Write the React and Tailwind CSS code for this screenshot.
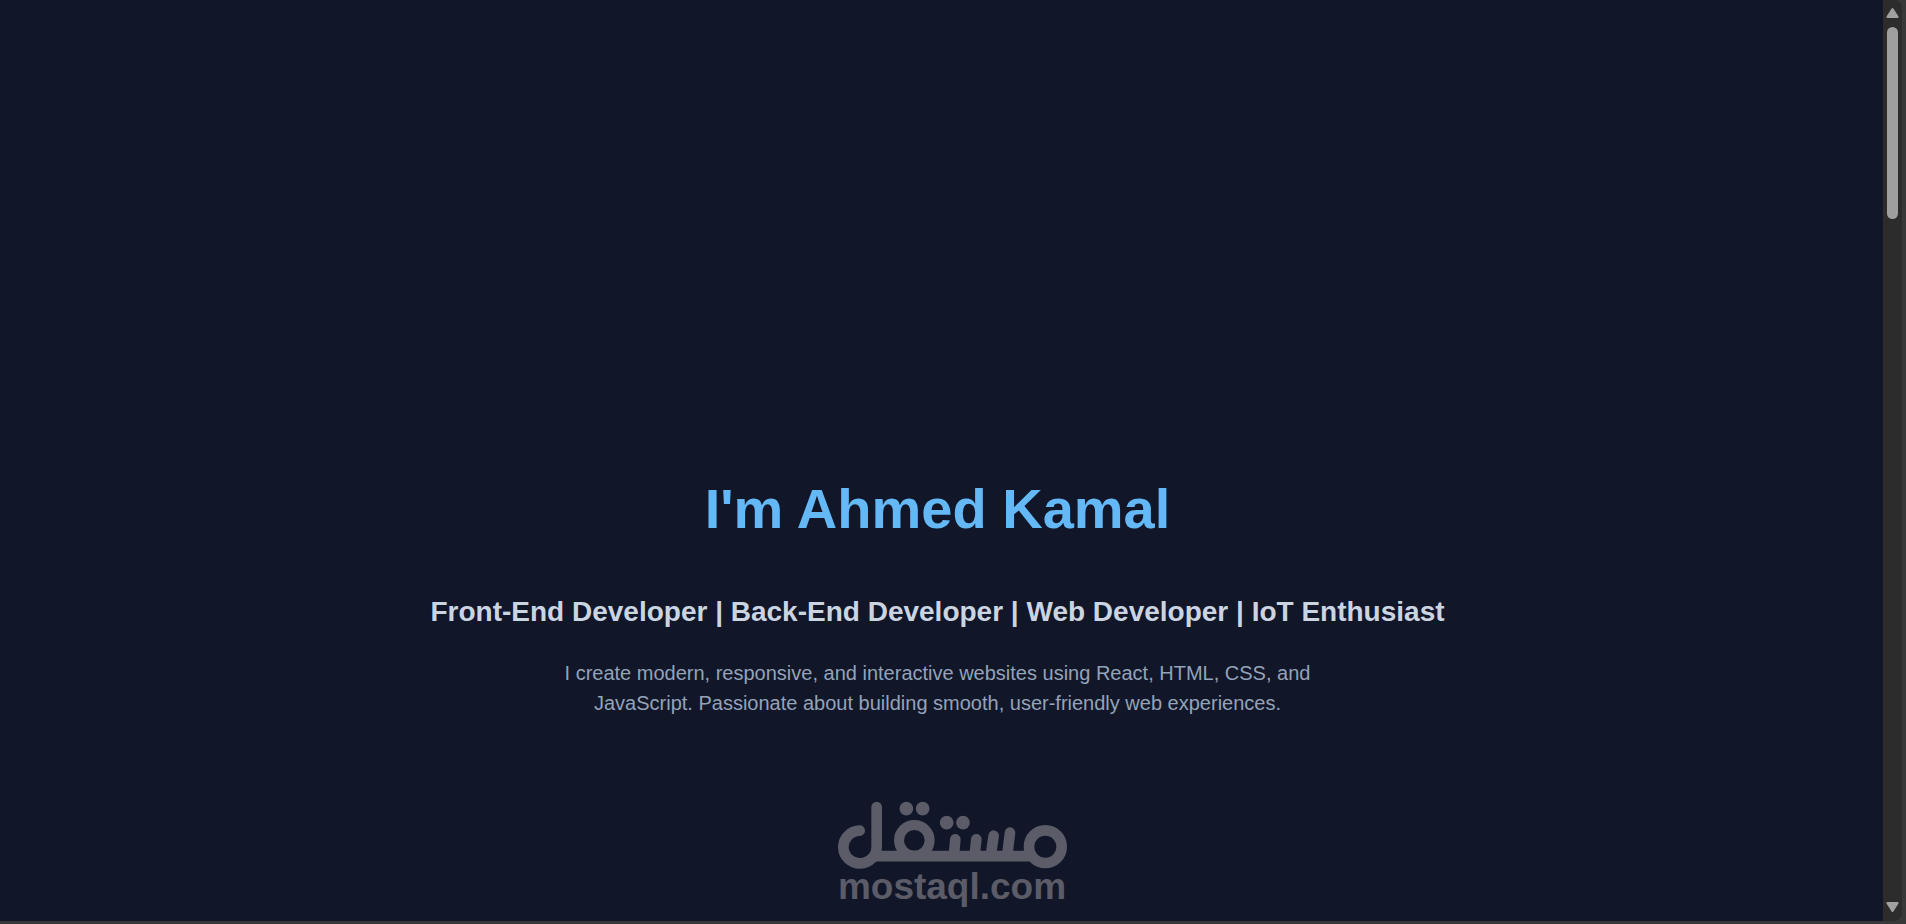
const roles = ['Front-End Developer', 'Back-End Developer', 'Web Developer', 'IoT Enthusiast'];

function Hero() {
  return (
    <section className="flex flex-1 flex-col items-center justify-end pr-2 pb-[203px] text-center">
      <h1 className="text-[56px] leading-[64px] font-bold text-[#63b8f5]">I'm Ahmed Kamal</h1>
      <h2 className="mt-[55px] text-[28px] leading-8 font-bold text-[#cbd5e1]">
        {roles.join(' | ')}
      </h2>
      <p className="mt-[30px] max-w-[800px] text-[20px] leading-[30px] text-[#94a3b8]">
        I create modern, responsive, and interactive websites using React, HTML, CSS, and
        JavaScript. Passionate about building smooth, user-friendly web experiences.
      </p>
    </section>
  );
}

function Scrollbar() {
  return (
    <div aria-hidden="true" className="flex w-[23px] bg-[#383838]">
      <div className="flex w-[19px] flex-col items-center rounded-r-lg bg-[#2c2c2c] pt-2 pb-[9px]">
        <svg className="h-[10px] w-[13px] fill-[#a0a0a0]" viewBox="0 0 13 10">
          <path d="M5.6.6Q6.5-.4 7.4.6L12.5 8.4Q13 10 11.4 10H1.6Q0 10 .5 8.4Z" />
        </svg>
        <div className="mt-[9px] h-48 w-[11px] rounded-full bg-[#9f9f9f]" />
        <svg className="mt-auto h-[10px] w-[13px] fill-[#a0a0a0]" viewBox="0 0 13 10">
          <path d="M5.6 9.4Q6.5 10.4 7.4 9.4L12.5 1.6Q13 0 11.4 0H1.6Q0 0 .5 1.6Z" />
        </svg>
      </div>
    </div>
  );
}

function Watermark() {
  return (
    <div className="pointer-events-none absolute inset-x-0 bottom-4 flex flex-col items-center pr-[2px] text-[#5b5c67]">
      <svg
        className="h-[68px] w-[229px]"
        viewBox="54 62 687 204"
        fill="none"
        stroke="currentColor"
        strokeWidth="32"
        strokeLinecap="round"
        role="img"
        aria-label="مستقل"
      >
        <circle cx="676" cy="199" r="49" />
        <circle cx="283" cy="180" r="46" strokeWidth="30" />
        <path d="M165 227.5H640" strokeLinecap="butt" />
        <path d="M170 80V199A50 49 0 1 1 119 151" />
        <path d="M406 177L402 222M469 177L464 222M521 166L513 222M570 157L562 222" />
        <g fill="currentColor" stroke="none">
          <circle cx="259" cy="85" r="20.5" />
          <circle cx="308" cy="85" r="20.5" />
          <circle cx="380" cy="127" r="20.5" />
          <circle cx="429" cy="127" r="20.5" />
        </g>
      </svg>
      <span className="text-[37px] leading-9 font-bold">mostaql.com</span>
    </div>
  );
}

export default function App() {
  return (
    <div className="relative flex h-screen flex-col overflow-hidden border-b-3 border-[#383838] bg-[#111629] font-['Liberation_Sans',Arial,sans-serif]">
      <div className="flex flex-1">
        <Hero />
        <Scrollbar />
      </div>
      <Watermark />
    </div>
  );
}
